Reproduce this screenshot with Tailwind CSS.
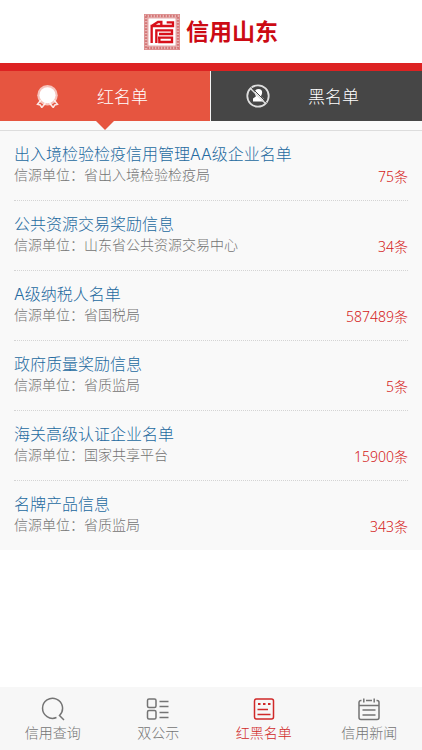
<!DOCTYPE html>
<html lang="zh-CN">
<head>
<meta charset="utf-8">
<meta name="viewport" content="width=device-width, initial-scale=1">
<title>信用山东</title>
<script src="https://cdn.jsdelivr.net/npm/@tailwindcss/browser@4"></script>
</head>
<body class="flex min-h-screen flex-col bg-white font-['Inter','Noto_Sans_CJK_SC',sans-serif] font-light">
<header class="flex h-[71px] items-center justify-center gap-[6px] border-b-8 border-[#dd2222] bg-white">
  <svg class="size-[36px]" viewBox="0 0 108 108" fill="none" aria-hidden="true">
    <rect x="6" y="6" width="96" height="96" stroke="#e8b4b4" stroke-width="11"/>
    <rect x="6" y="6" width="96" height="96" stroke="#d47878" stroke-width="7" stroke-dasharray="5 4"/>
    <rect x="1" y="1" width="106" height="106" stroke="#d98080" stroke-width="2"/>
    <rect x="12" y="12" width="84" height="84" stroke="#d98080" stroke-width="2"/>
    <g stroke="#d8101a" stroke-width="7">
      <path d="M23 87V36H87V25H68M23 36L42 24H52V36"/>
      <path d="M37 87V49H84V60H45M42 71H84V84H46V71"/>
    </g>
  </svg>
  <h1 class="text-[23px] leading-[32px] font-bold text-[#cc0a14]">信用山东</h1>
</header>

<main class="flex-1">
  <nav class="grid h-[60px] grid-cols-2 border-b border-[#dddddd] bg-[#fafafa] pb-[9px]" aria-label="名单类型">
    <a href="#red" class="relative flex items-center border-r border-[#f4f4f4] bg-[#e65540] pl-[36px] text-[17px] leading-[24px] text-white" aria-current="page">
      <svg class="size-[23px]" viewBox="0 0 22 22" aria-hidden="true">
        <path d="M4.500 14.500L1.500 18.500L4 19L5.500 21.500L9 17.500M17.500 14.500L20.500 18.500L18 19L16.500 21.500L13 17.500" fill="none" stroke="#fff" stroke-opacity=".85" stroke-width="1.500"/>
        <circle cx="11" cy="9.800" r="9.800" fill="#fff" fill-opacity=".65"/>
        <circle cx="11" cy="9.800" r="7.700" fill="#fff"/>
      </svg>
      <span class="ml-[38px] pt-[2px]">红名单</span>
      <span class="absolute top-full left-1/2 h-[9px] w-[18px] -translate-x-1/2 bg-[#e65540] [clip-path:polygon(0_0,100%_0,50%_100%)]"></span>
    </a>
    <a href="#black" class="flex items-center bg-[#464646] pl-[35px] text-[17px] leading-[24px] text-white">
      <svg class="size-[24px]" viewBox="0 0 24 24" fill="none" aria-hidden="true">
        <path d="M12.500 5C15.500 5 16.500 7 16 9.500C15.700 11 15 11.500 15 12.500L17.500 14.500V17.500H7V14.500L9.800 12.500C9.800 11.500 9.300 11 9 9.500C8.500 7 9.500 5 12.500 5Z" fill="#fff"/>
        <circle cx="12" cy="12" r="10.700" stroke="#dedede" stroke-width="1.800"/>
        <path d="M5.500 3.500L20.500 18.500" stroke="#464646" stroke-width="1"/>
        <path d="M4.500 4.500L19.500 19.500" stroke="#dedede" stroke-width="1.500"/>
      </svg>
      <span class="ml-[38px] pt-[2px]">黑名单</span>
    </a>
  </nav>

  <ul class="bg-[#f9f9f9] px-[14px]">
    <li class="flex h-[70px] items-start justify-between border-b border-dotted border-[#d4d4d4] pt-[12px]">
      <div><a href="#1" class="block text-[16px] leading-[22px] text-[#24699f]">出入境检验检疫信用管理AA级企业名单</a><p class="text-[14px] leading-[20px] text-[#747474]">信源单位：省出入境检验检疫局</p></div>
      <span class="mt-[24px] font-['Noto_Sans','Noto_Sans_CJK_SC',sans-serif] text-[14px] leading-[20px] text-[#d42020]">75条</span>
    </li>
    <li class="flex h-[70px] items-start justify-between border-b border-dotted border-[#d4d4d4] pt-[12px]">
      <div><a href="#2" class="block text-[16px] leading-[22px] text-[#24699f]">公共资源交易奖励信息</a><p class="text-[14px] leading-[20px] text-[#747474]">信源单位：山东省公共资源交易中心</p></div>
      <span class="mt-[24px] font-['Noto_Sans','Noto_Sans_CJK_SC',sans-serif] text-[14px] leading-[20px] text-[#d42020]">34条</span>
    </li>
    <li class="flex h-[70px] items-start justify-between border-b border-dotted border-[#d4d4d4] pt-[12px]">
      <div><a href="#3" class="block text-[16px] leading-[22px] text-[#24699f]">A级纳税人名单</a><p class="text-[14px] leading-[20px] text-[#747474]">信源单位：省国税局</p></div>
      <span class="mt-[24px] font-['Noto_Sans','Noto_Sans_CJK_SC',sans-serif] text-[14px] leading-[20px] text-[#d42020]">587489条</span>
    </li>
    <li class="flex h-[70px] items-start justify-between border-b border-dotted border-[#d4d4d4] pt-[12px]">
      <div><a href="#4" class="block text-[16px] leading-[22px] text-[#24699f]">政府质量奖励信息</a><p class="text-[14px] leading-[20px] text-[#747474]">信源单位：省质监局</p></div>
      <span class="mt-[24px] font-['Noto_Sans','Noto_Sans_CJK_SC',sans-serif] text-[14px] leading-[20px] text-[#d42020]">5条</span>
    </li>
    <li class="flex h-[70px] items-start justify-between border-b border-dotted border-[#d4d4d4] pt-[12px]">
      <div><a href="#5" class="block text-[16px] leading-[22px] text-[#24699f]">海关高级认证企业名单</a><p class="text-[14px] leading-[20px] text-[#747474]">信源单位：国家共享平台</p></div>
      <span class="mt-[24px] font-['Noto_Sans','Noto_Sans_CJK_SC',sans-serif] text-[14px] leading-[20px] text-[#d42020]">15900条</span>
    </li>
    <li class="flex h-[69px] items-start justify-between pt-[12px]">
      <div><a href="#6" class="block text-[16px] leading-[22px] text-[#24699f]">名牌产品信息</a><p class="text-[14px] leading-[20px] text-[#747474]">信源单位：省质监局</p></div>
      <span class="mt-[24px] font-['Noto_Sans','Noto_Sans_CJK_SC',sans-serif] text-[14px] leading-[20px] text-[#d42020]">343条</span>
    </li>
  </ul>
</main>

<nav class="grid h-[63px] grid-cols-4 bg-[#f7f7f7] pt-[10px] text-[14px] leading-[20px] text-[#747474]" aria-label="主导航">
  <a href="#search" class="flex flex-col items-center gap-[2px]">
    <svg class="size-[24px]" viewBox="0 0 24 24" fill="none" stroke="currentColor" stroke-width="1.500" aria-hidden="true"><path d="M15.500 20.500A10 10 0 1 1 18.500 18.500L23 23"/></svg>
    信用查询
  </a>
  <a href="#public" class="flex flex-col items-center gap-[2px]">
    <svg class="size-[24px]" viewBox="0 0 24 24" fill="none" stroke="currentColor" stroke-width="1.500" aria-hidden="true"><rect x="1.500" y="2" width="8.500" height="8.500" rx="1.500"/><rect x="1.500" y="13.500" width="8.500" height="8.500" rx="1.500"/><path d="M13.500 4.500H22.500M13.500 9.500H22.500M13.500 15.500H22.500M13.500 20.500H22.500"/></svg>
    双公示
  </a>
  <a href="#lists" class="flex flex-col items-center gap-[2px] text-[#d02828]" aria-current="page">
    <svg class="size-[24px]" viewBox="0 0 24 24" fill="none" stroke="currentColor" stroke-width="1.500" aria-hidden="true"><rect x="2.500" y="2" width="19" height="20" rx="2"/><path d="M6 7H8.500M11 7H13.500M16 7H18.500" stroke-width="2"/><path d="M5.500 12.500H16M5.500 17.500H18.500"/></svg>
    红黑名单
  </a>
  <a href="#news" class="flex flex-col items-center gap-[2px]">
    <svg class="size-[24px]" viewBox="0 0 24 24" fill="none" stroke="currentColor" stroke-width="1.500" aria-hidden="true"><path d="M4.500 3.500H4A2 2 0 0 0 2 5.500V20.500A2 2 0 0 0 4 22.500H20A2 2 0 0 0 22 20.500V5.500A2 2 0 0 0 20 3.500H19.500M9 3.500H15M6.800 1.500V5.500M17.200 1.500V5.500M2 8.500H22M5.500 13H18.500M5.500 18H18.500"/></svg>
    信用新闻
  </a>
</nav>
</body>
</html>
